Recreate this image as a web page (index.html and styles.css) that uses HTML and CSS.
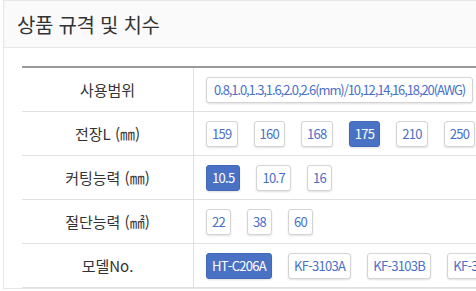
FILE: index.html
```html
<!DOCTYPE html>
<html lang="ko">
<head>
<meta charset="utf-8">
<link rel="stylesheet" href="styles.css">
</head>
<body>
<div class="panel">
  <div class="panel-head"><h2 class="title">상품 규격 및 치수</h2></div>
  <div class="panel-body">
    <table class="spec">
      <tr>
        <th>사용범위</th>
        <td><div class="opts"><span class="btn wide">0.8,1.0,1.3,1.6,2.0,2.6(mm)/10,12,14,16,18,20(AWG)</span></div></td>
      </tr>
      <tr>
        <th>전장L (㎜)</th>
        <td><div class="opts"><span class="btn">159</span><span class="btn">160</span><span class="btn">168</span><span class="btn active">175</span><span class="btn">210</span><span class="btn">250</span></div></td>
      </tr>
      <tr>
        <th>커팅능력 (㎜)</th>
        <td><div class="opts"><span class="btn active">10.5</span><span class="btn">10.7</span><span class="btn">16</span></div></td>
      </tr>
      <tr>
        <th>절단능력 (㎟)</th>
        <td><div class="opts"><span class="btn">22</span><span class="btn">38</span><span class="btn">60</span></div></td>
      </tr>
      <tr>
        <th>모델No.</th>
        <td><div class="opts"><span class="btn active">HT-C206A</span><span class="btn">KF-3103A</span><span class="btn">KF-3103B</span><span class="btn">KF-3103C</span></div></td>
      </tr>
    </table>
  </div>
</div>
</body>
</html>
```
FILE: styles.css
```css
html, body {
  margin: 0;
  padding: 0;
  background: #fff;
  overflow: hidden;
}
body {
  font-family: "Noto Sans CJK KR", "Noto Sans", sans-serif;
  color: #333;
}
.panel {
  margin-left: 3px;
  width: 640px;
  border: 1px solid #e6e6e6;
  border-right: none;
}
.panel-head {
  background: #fafafa;
  height: 46px;
  border-bottom: 1px solid #e6e6e6;
  display: flex;
  align-items: center;
  padding-left: 13px;
}
.title {
  margin: 0;
  font-size: 20px;
  font-weight: 400;
  color: #333;
  letter-spacing: -0.3px;
}
.panel-body {
  padding: 18px 0 0 18px;
}
.spec {
  border-collapse: collapse;
  width: 600px;
  border-top: 2px solid #999;
}
.spec th {
  width: 171px;
  height: 43px;
  padding: 0;
  font-size: 15px;
  font-weight: 400;
  color: #333;
  text-align: center;
  border-bottom: 1px solid #e0e0e0;
  border-right: 1px solid #e0e0e0;
}
.spec td {
  padding: 0 0 0 12px;
  border-bottom: 1px solid #e0e0e0;
}
.opts {
  display: flex;
  gap: 16px;
  white-space: nowrap;
}
.btn {
  display: inline-flex;
  align-items: center;
  height: 24px;
  padding: 0 5px;
  border: 1px solid #d4d4d4;
  border-radius: 3px;
  box-shadow: 0 1px 2px rgba(0,0,0,0.12);
  font-size: 13px;
  letter-spacing: -0.7px;
  color: #4a70c8;
  background: #fff;
}
.btn.wide {
  letter-spacing: -1.1px;
  padding: 0 7px;
}
.btn.active {
  background: #4a72c4;
  border-color: #4268b8;
  color: #fff;
}
```
